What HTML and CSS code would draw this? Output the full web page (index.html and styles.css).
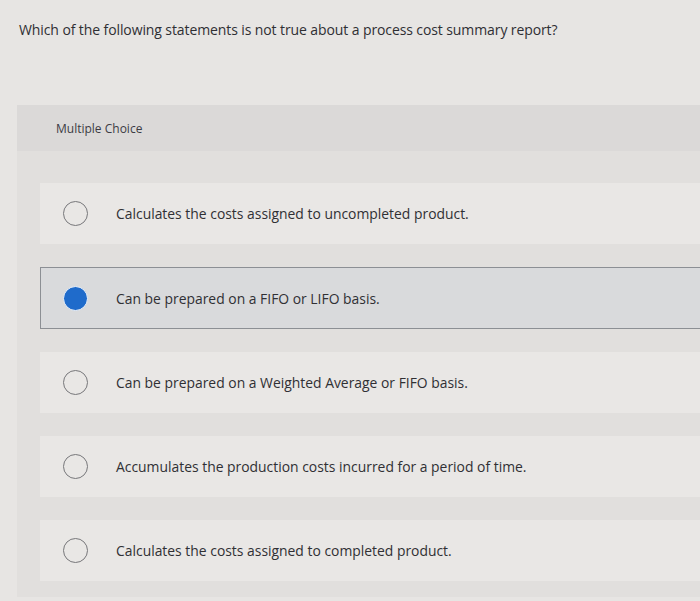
FILE: index.html
```html
<!DOCTYPE html>
<html>
<head>
<meta charset="utf-8">
<link rel="stylesheet" href="styles.css">
</head>
<body>
<div class="page">
  <p class="question">Which of the following statements is not true about a process cost summary report?</p>
  <div class="panel">
    <div class="panel-head">Multiple Choice</div>
    <div class="options">
      <div class="option"><span class="radio"></span><span class="label">Calculates the costs assigned to uncompleted product.</span></div>
      <div class="option selected"><span class="radio"></span><span class="label">Can be prepared on a FIFO or LIFO basis.</span></div>
      <div class="option"><span class="radio"></span><span class="label">Can be prepared on a Weighted Average or FIFO basis.</span></div>
      <div class="option"><span class="radio"></span><span class="label">Accumulates the production costs incurred for a period of time.</span></div>
      <div class="option"><span class="radio"></span><span class="label">Calculates the costs assigned to completed product.</span></div>
    </div>
  </div>
</div>
</body>
</html>
```
FILE: styles.css
```css
html, body {
  margin: 0;
  padding: 0;
  background: #e7e5e3;
  overflow: hidden;
}
.page {
  width: 700px;
  height: 601px;
  font-family: "Open Sans", "Liberation Sans", sans-serif;
  color: #2f2f33;
}
.question {
  margin: 0;
  padding: 20px 0 0 19px;
  font-size: 14px;
  line-height: 20px;
  letter-spacing: -0.1px;
}
.panel {
  margin: 65px 0 0 17px;
  background: #e1dfdd;
  height: 492px;
}
.panel-head {
  height: 46px;
  background: #dbd9d8;
  padding-left: 39px;
  display: flex;
  align-items: center;
  font-size: 12px;
  color: #3c3c44;
}
.options {
  padding: 32px 0 0 23px;
  display: flex;
  flex-direction: column;
  gap: 23px;
}
.option {
  height: 61px;
  background: #e9e7e5;
  display: flex;
  align-items: center;
  padding-left: 23px;
  gap: 28px;
  font-size: 13.9px;
  color: #303034;
}
.option.selected {
  background: #d9dadc;
  border: 1px solid #8c8f94;
  border-right: none;
  padding-left: 22px;
  height: 60px;
}
.radio {
  width: 23px;
  height: 23px;
  border-radius: 50%;
  border: 1.5px solid #77777a;
  flex: none;
}
.selected .radio {
  background: #1f6bcb;
  border: 1.5px solid #eef2f8;
}
```
